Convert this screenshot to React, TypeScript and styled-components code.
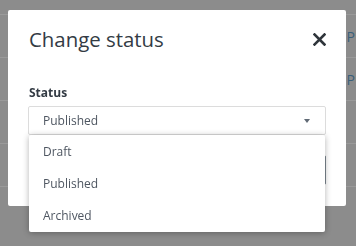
import React from "react";
import styled, { createGlobalStyle } from "styled-components";

const GlobalStyle = createGlobalStyle`
  html, body {
    margin: 0;
    padding: 0;
    background: #8c8c8c;
    font-family: "Open Sans", "Liberation Sans", sans-serif;
    overflow: hidden;
  }
`;

const Page = styled.div`
  width: 356px;
  height: 246px;
  padding-top: 14px;
  box-sizing: border-box;
`;

const BgRow = styled.div`
  height: 43px;
  border-top: 1px solid #9a9a9a;
  display: flex;
  justify-content: flex-end;
  align-items: center;
  padding-right: 1px;
  box-sizing: border-box;
  font-size: 14px;
  color: #3a5f7a;
`;

const Modal = styled.div`
  position: fixed;
  left: 8px;
  top: 10px;
  width: 338px;
  height: 196px;
  background: #fff;
  border-radius: 2px;
  box-sizing: border-box;
  display: flex;
  flex-direction: column;
`;

const Header = styled.div`
  display: flex;
  align-items: flex-start;
  justify-content: space-between;
  padding: 14px 20px 0 21px;
`;

const Title = styled.h2`
  margin: 0;
  font-size: 20.4px;
  font-weight: 400;
  line-height: 30px;
  color: #333b44;
`;

const Close = styled.button`
  border: 0;
  background: none;
  padding: 0;
  width: 13px;
  height: 13px;
  display: flex;
  margin-top: 9px;
`;

const Body = styled.div`
  padding: 30px 20px 0 20px;
`;

const Label = styled.div`
  font-size: 12px;
  font-weight: 700;
  color: #333b44;
  line-height: 18px;
  margin-left: 1px;
  margin-bottom: 4px;
`;

const SelectWrap = styled.div`
  position: relative;
`;

const Select = styled.div`
  height: 29px;
  border: 1px solid #dcdcdc;
  border-radius: 2px;
  display: flex;
  align-items: center;
  justify-content: space-between;
  padding: 0 14px;
  box-sizing: border-box;
  font-size: 12px;
  color: #4e5661;
`;

const Caret = styled.span`
  width: 0;
  height: 0;
  border-left: 3.5px solid transparent;
  border-right: 3.5px solid transparent;
  border-top: 4px solid #606a75;
  margin-right: 1px;
`;

const Footer = styled.div`
  display: flex;
  justify-content: flex-end;
  padding: 20px 20px 0 20px;
`;

const SaveButton = styled.button`
  height: 30px;
  width: 80px;
  border: 1px solid #7d8790;
  background: #5f6a74;
  border-radius: 2px;
  color: #fff;
  font-family: inherit;
`;

const Menu = styled.ul`
  position: absolute;
  left: 1px;
  right: 1px;
  top: 100%;
  z-index: 2;
  margin: 0;
  padding: 0 0 1px;
  list-style: none;
  background: #fff;
  border-radius: 2px;
  box-shadow: 0 1px 6px rgba(0, 0, 0, 0.3);
`;

const Option = styled.li`
  height: 32px;
  display: flex;
  align-items: center;
  padding: 0 14px;
  font-size: 12px;
  color: #4e5661;
`;

const options = ["Draft", "Published", "Archived"];

export default function App() {
  return (
    <Page>
      <GlobalStyle />
      <BgRow>P</BgRow>
      <BgRow>P</BgRow>
      <BgRow />
      <BgRow />
      <BgRow />
      <Modal>
        <Header>
          <Title>Change status</Title>
          <Close aria-label="Close">
            <svg width="13" height="13" viewBox="0 0 13 13">
              <path
                d="M1.5 1.5 L11.5 11.5 M11.5 1.5 L1.5 11.5"
                stroke="#2f353b"
                strokeWidth="2.6"
                strokeLinecap="square"
              />
            </svg>
          </Close>
        </Header>
        <Body>
          <Label>Status</Label>
          <SelectWrap>
            <Select>
              <span>Published</span>
              <Caret />
            </Select>
            <Menu>
              {options.map((o) => (
                <Option key={o}>{o}</Option>
              ))}
            </Menu>
          </SelectWrap>
        </Body>
        <Footer>
          <SaveButton>Save</SaveButton>
        </Footer>
      </Modal>
    </Page>
  );
}
